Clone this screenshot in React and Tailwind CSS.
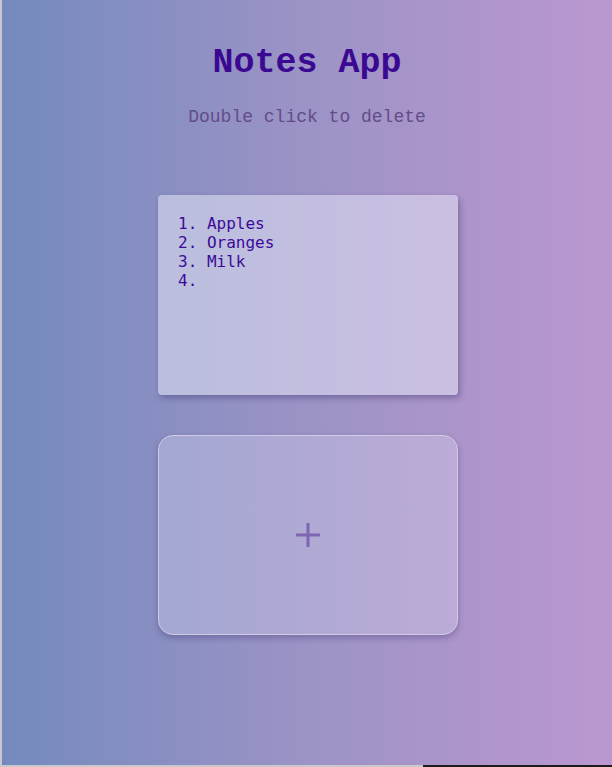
import React from 'react';

const mono = { fontFamily: '"Liberation Mono", "DejaVu Sans Mono", monospace' };

function NoteCard({ text }) {
    return (
        <textarea
            readOnly
            value={text}
            className="w-[300px] h-[200px] resize-none rounded-[4px] px-5 pt-[19px] text-[16px] leading-[19px] text-[#3c0a99] bg-gradient-to-r from-[#babedd] to-[#cbbfe2] shadow-[2px_3px_6px_rgba(40,30,90,0.35)] outline-none"
            style={{ fontFamily: '"DejaVu Sans Mono", monospace' }}
        />
    );
}

function AddCard() {
    return (
        <button className="w-[300px] h-[200px] rounded-[15px] border border-[#d2cbe6] bg-gradient-to-r from-[#a3a8d3] to-[#bcabd6] shadow-[0_3px_6px_rgba(40,30,90,0.3)] flex items-center justify-center">
            <svg width="26" height="26" viewBox="0 0 26 26">
                <path d="M13 1v24M1 13h24" stroke="#7c67b0" strokeWidth="3" />
            </svg>
        </button>
    );
}

export default function App() {
    return (
        <div className="w-[612px] h-[767px] flex flex-col overflow-hidden">
            <div className="flex flex-1">
                <div className="w-[2px] bg-[#c9c9cc]" />
                <main className="flex-1 flex flex-col items-center bg-gradient-to-r from-[#748abe] via-[#9c93c6] to-[#bb97d0]">
                    <h1 className="mt-[43px] text-[35px] leading-[40px] font-bold text-[#3b0892]" style={mono}>
                        Notes App
                    </h1>
                    <p className="mt-[23px] text-[18px] leading-[22px] text-[#634c8a]" style={mono}>
                        Double click to delete
                    </p>
                    <div className="mt-[67px] ml-[2px] flex flex-col gap-10">
                        <NoteCard text={"1. Apples\n2. Oranges\n3. Milk\n4. "} />
                        <AddCard />
                    </div>
                </main>
            </div>
            <div className="h-[2px] flex">
                <div className="w-[423px] bg-[#c9c9cc]" />
                <div className="flex-1 bg-[#1c1c1c]" />
            </div>
        </div>
    );
}
